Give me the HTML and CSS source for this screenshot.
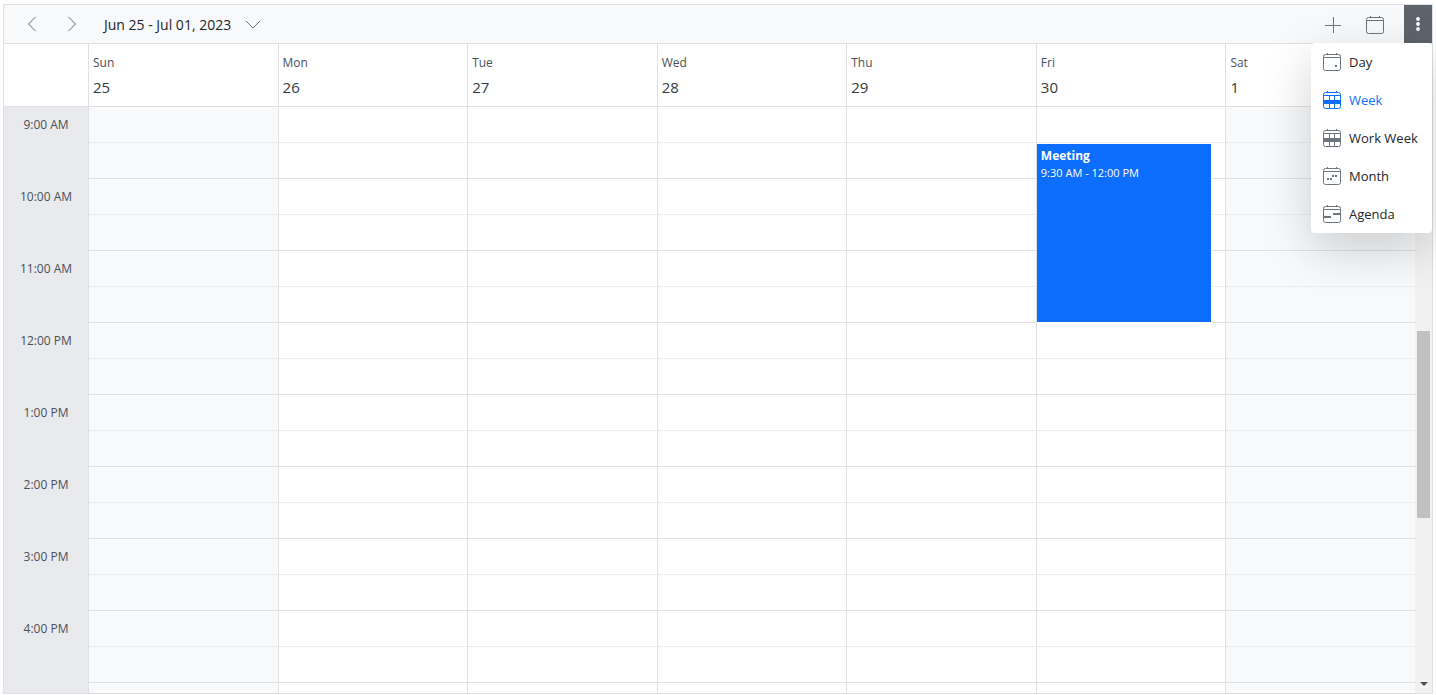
FILE: index.html
```html
<!DOCTYPE html>
<html lang="en">
<head>
  <meta charset="UTF-8">
  <meta name="viewport" content="width=device-width, initial-scale=1">
  <title>Schedule</title>
  <link rel="stylesheet" href="styles.css">
</head>
<body>

<div class="schedule">
  <div class="toolbar">
    <button class="nav-btn" aria-label="Previous week">
      <svg width="16" height="16" viewBox="0 0 16 16"><path d="M11.5 1L4.5 8l7 7"/></svg>
    </button>
    <button class="nav-btn" aria-label="Next week">
      <svg width="16" height="16" viewBox="0 0 16 16"><path d="M4.500 1l7 7-7 7"/></svg>
    </button>
    <button class="date-range">
      <span>Jun 25 - Jul 01, 2023</span>
      <svg width="16" height="16" viewBox="0 0 16 16"><path d="M1 5l7 7 7-7"/></svg>
    </button>
    <div class="toolbar-right">
      <button class="tool-btn" aria-label="New event">
        <svg width="18" height="18" viewBox="0 0 18 18"><path d="M9.500 2v16M1 10.500h16"/></svg>
      </button>
      <button class="tool-btn" aria-label="Today">
        <svg width="20" height="20" viewBox="0 0 20 20"><rect x="1.500" y="3.500" width="17" height="16" rx="2"/><path d="M1.500 6.500h17M5.500 2v2M14.500 2v2"/></svg>
      </button>
      <div class="more">
        <button class="more-btn" aria-label="Views" aria-expanded="true">
          <svg width="6" height="18" viewBox="0 0 6 18"><circle cx="3" cy="4" r="1.900"/><circle cx="3" cy="9" r="1.900"/><circle cx="3" cy="14" r="1.900"/></svg>
        </button>
        <div class="view-menu">
          <button class="view-item">
            <svg width="20" height="20" viewBox="0 0 20 20"><rect x="1.500" y="2.500" width="17" height="16" rx="2"/><path d="M1.500 5.500h17M5.500 1v2M14.500 1v2"/><path class="fill" d="M13 13h2v2h-2z"/></svg>
            Day
          </button>
          <button class="view-item active">
            <svg width="20" height="20" viewBox="0 0 20 20"><rect x="1.500" y="2.500" width="17" height="16" rx="2"/><path d="M1.500 5.500h17M5.500 1v2M14.500 1v2M7.500 5.500v13M12.500 5.500v13"/><path class="fill" d="M1 10h18v4H1z"/></svg>
            Week
          </button>
          <button class="view-item">
            <svg width="20" height="20" viewBox="0 0 20 20"><rect x="1.500" y="2.500" width="17" height="16" rx="2"/><path d="M1.500 5.500h17M5.500 1v2M14.500 1v2M7.500 5.500v13M12.500 5.500v13"/><path class="fill" d="M1 10h18v4H1z"/></svg>
            Work Week
          </button>
          <button class="view-item">
            <svg width="20" height="20" viewBox="0 0 20 20"><rect x="1.500" y="2.500" width="17" height="16" rx="2"/><path d="M1.500 5.500h17M5.500 1v2M14.500 1v2"/><path class="fill" d="M5 12h2v2H5zM8 12h2v2H8zM10 9h2v2h-2zM13 9h2v2h-2z"/></svg>
            Month
          </button>
          <button class="view-item">
            <svg width="20" height="20" viewBox="0 0 20 20"><rect x="1.500" y="2.500" width="17" height="16" rx="2"/><path d="M1.500 5.500h17M5.500 1v2M14.500 1v2"/><path class="fill" d="M11 9h7v2h-7zM2 12h7v2H2z"/></svg>
            Agenda
          </button>
        </div>
      </div>
    </div>
  </div>

  <div class="header-wrap">
    <table class="days">
      <colgroup><col class="time-col"><col span="7"></colgroup>
      <thead>
        <tr>
          <td></td>
          <th scope="col"><span class="day-name">Sun</span><span class="day-num">25</span></th>
          <th scope="col"><span class="day-name">Mon</span><span class="day-num">26</span></th>
          <th scope="col"><span class="day-name">Tue</span><span class="day-num">27</span></th>
          <th scope="col"><span class="day-name">Wed</span><span class="day-num">28</span></th>
          <th scope="col"><span class="day-name">Thu</span><span class="day-num">29</span></th>
          <th scope="col"><span class="day-name">Fri</span><span class="day-num">30</span></th>
          <th scope="col"><span class="day-name">Sat</span><span class="day-num">1</span></th>
        </tr>
      </thead>
    </table>
  </div>

  <div class="content-wrap">
    <div class="slots-wrap">
      <table class="slots">
        <colgroup><col class="time-col"><col class="weekend"><col span="5"><col class="weekend"></colgroup>
        <tbody>
          <tr><th scope="row" rowspan="2">9:00 AM</th><td></td><td></td><td></td><td></td><td></td><td></td><td></td></tr>
          <tr class="hour-end"><td></td><td></td><td></td><td></td><td></td>
            <td>
              <div class="event">
                <div class="event-title">Meeting</div>
                <div class="event-time">9:30 AM - 12:00 PM</div>
              </div>
            </td>
            <td></td></tr>
          <tr><th scope="row" rowspan="2">10:00 AM</th><td></td><td></td><td></td><td></td><td></td><td></td><td></td></tr>
          <tr class="hour-end"><td></td><td></td><td></td><td></td><td></td><td></td><td></td></tr>
          <tr><th scope="row" rowspan="2">11:00 AM</th><td></td><td></td><td></td><td></td><td></td><td></td><td></td></tr>
          <tr class="hour-end"><td></td><td></td><td></td><td></td><td></td><td></td><td></td></tr>
          <tr><th scope="row" rowspan="2">12:00 PM</th><td></td><td></td><td></td><td></td><td></td><td></td><td></td></tr>
          <tr class="hour-end"><td></td><td></td><td></td><td></td><td></td><td></td><td></td></tr>
          <tr><th scope="row" rowspan="2">1:00 PM</th><td></td><td></td><td></td><td></td><td></td><td></td><td></td></tr>
          <tr class="hour-end"><td></td><td></td><td></td><td></td><td></td><td></td><td></td></tr>
          <tr><th scope="row" rowspan="2">2:00 PM</th><td></td><td></td><td></td><td></td><td></td><td></td><td></td></tr>
          <tr class="hour-end"><td></td><td></td><td></td><td></td><td></td><td></td><td></td></tr>
          <tr><th scope="row" rowspan="2">3:00 PM</th><td></td><td></td><td></td><td></td><td></td><td></td><td></td></tr>
          <tr class="hour-end"><td></td><td></td><td></td><td></td><td></td><td></td><td></td></tr>
          <tr><th scope="row" rowspan="2">4:00 PM</th><td></td><td></td><td></td><td></td><td></td><td></td><td></td></tr>
          <tr class="hour-end"><td></td><td></td><td></td><td></td><td></td><td></td><td></td></tr>
          <tr><th></th><td></td><td></td><td></td><td></td><td></td><td></td><td></td></tr>
        </tbody>
      </table>
    </div>
    <div class="scrollbar">
      <div class="track-before"></div>
      <div class="thumb"></div>
      <div class="track-after"></div>
      <svg class="scroll-down" width="16" height="17" viewBox="0 0 16 17"><path d="M4 6h8l-4 4z"/></svg>
    </div>
  </div>
</div>

</body>
</html>
```

FILE: styles.css
```css
* {
  box-sizing: border-box;
}
body {
  margin: 0;
  padding: 4px 3px 1px;
  height: 100vh;
  background: #fff;
  color: #212529;
  font-family: 'Segoe UI', 'Open Sans', sans-serif;
  font-size: 13px;
}
button {
  border: none;
  background: none;
  padding: 0;
  color: inherit;
  font: inherit;
  cursor: pointer;
}
svg {
  display: block;
  flex: none;
  fill: none;
  stroke: #6c757d;
}
svg .fill {
  fill: #6c757d;
  stroke: none;
}
.schedule {
  display: flex;
  flex-direction: column;
  height: 100%;
  border: 1px solid #dee0e2;
}

/* Toolbar */
.toolbar {
  display: flex;
  align-items: stretch;
  flex: none;
  height: 39px;
  padding-left: 8px;
  background: #f8f9fa;
  border-bottom: 1px solid #dee0e2;
}
.nav-btn {
  display: flex;
  align-items: center;
  justify-content: center;
  width: 40px;
}
.date-range {
  display: flex;
  align-items: center;
  gap: 14px;
  padding: 0 12px;
  font-size: 14px;
}
.toolbar-right {
  display: flex;
  margin-left: auto;
}
.tool-btn {
  display: flex;
  align-items: center;
  justify-content: center;
  width: 42px;
}
.more {
  position: relative;
  display: flex;
  margin-left: 8px;
}
.more-btn {
  display: flex;
  align-items: center;
  justify-content: center;
  width: 28px;
  background: #5c636a;
}
.more-btn svg {
  fill: #fff;
  stroke: none;
}
.view-menu {
  position: absolute;
  top: 100%;
  right: 0;
  z-index: 10;
  min-width: 121px;
  background: #fff;
  border-radius: 4px;
  box-shadow: 0 16px 48px rgba(0, 0, 0, 0.18);
}
.view-item {
  display: flex;
  align-items: center;
  gap: 7px;
  width: 100%;
  height: 38px;
  padding: 0 11px;
  white-space: nowrap;
}
.view-item.active {
  color: #0d6efd;
}
.view-item.active svg {
  stroke: #0d6efd;
}
.view-item.active .fill {
  fill: #0d6efd;
}

/* Tables */
table {
  width: 100%;
  table-layout: fixed;
  border-collapse: separate;
  border-spacing: 0;
}
.time-col {
  width: 85px;
}
.header-wrap {
  flex: none;
  padding-right: 16px;
  border-bottom: 1px solid #dee0e2;
}
.days td, .days th {
  height: 62px;
  padding: 7px 4px 0;
  border-right: 1px solid #dee0e2;
  text-align: left;
  vertical-align: top;
  font-weight: normal;
}
.day-name, .day-num {
  display: block;
}
.day-name {
  font-size: 12px;
  line-height: 24px;
  color: #495057;
}
.day-num {
  font-size: 15px;
  line-height: 24px;
  color: #343a40;
}
.content-wrap {
  display: flex;
  flex: 1;
  min-height: 0;
  overflow: hidden;
}
.slots-wrap {
  flex: 1;
  min-width: 0;
}
.weekend {
  background: #f8f9fa;
}
.slots td {
  position: relative;
  height: 36px;
  padding: 0;
  border-right: 1px solid #dee0e2;
  border-bottom: 1px dotted #dee0e2;
}
.slots .hour-end td {
  border-bottom-style: solid;
}
.slots td:last-child {
  border-right-color: #f1f1f1;
}
.slots th {
  padding: 0;
  background: #e9eaed;
  border-right: 1px solid #dee0e2;
  color: #495057;
  font-size: 12px;
  font-weight: normal;
  line-height: 36px;
  vertical-align: top;
}
.event {
  position: absolute;
  top: 0;
  left: 0;
  z-index: 1;
  width: 93%;
  height: 180px;
  padding: 4px;
  border: 1px solid #fff;
  border-left: none;
  background: #0d6efd;
  color: #fff;
}
.event-title {
  font-size: 12px;
  font-weight: bold;
  line-height: 16px;
}
.event-time {
  font-size: 11px;
  line-height: 17px;
}

/* Scrollbar */
.scrollbar {
  display: flex;
  flex-direction: column;
  flex: none;
  width: 16px;
  background: #f1f1f1;
}
.track-before {
  flex: 224;
}
.thumb {
  flex: 187;
  margin: 0 2px 0 1px;
  background: #c1c1c1;
}
.track-after {
  flex: 158;
}
.scroll-down {
  fill: #505050;
  stroke: none;
}
```
